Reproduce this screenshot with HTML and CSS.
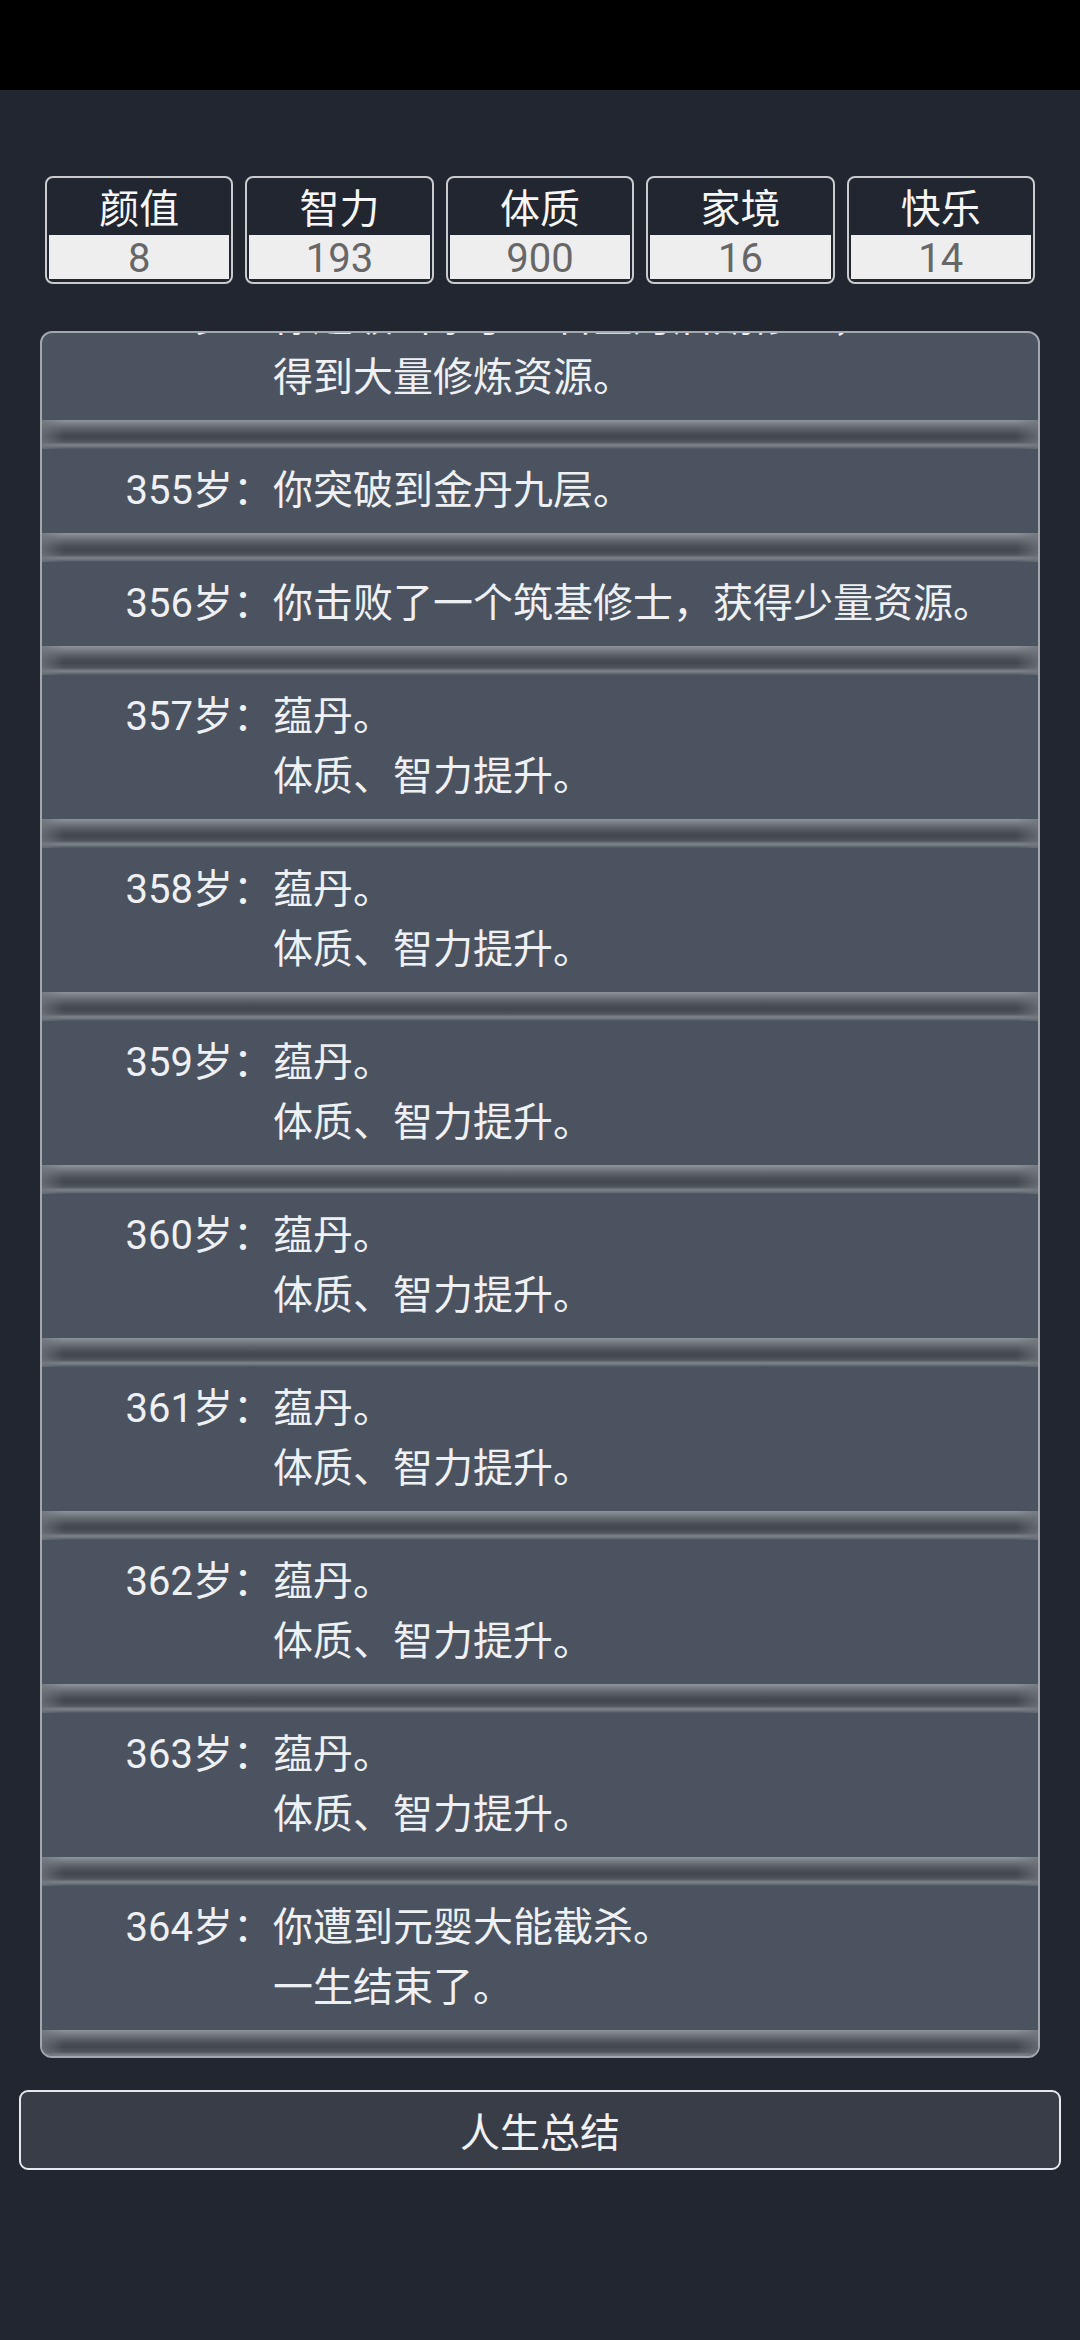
FILE: index.html
```html
<!DOCTYPE html>
<html lang="zh-CN">
<head>
    <meta charset="UTF-8">
    <title>人生重开</title>
    <link rel="stylesheet" href="styles.css">
</head>
<body>
    <div class="status-bar"></div>
    <div class="page">
        <div class="stats">
            <div class="stat">
                <div class="stat-name">颜值</div>
                <div class="stat-value">8</div>
            </div>
            <div class="stat">
                <div class="stat-name">智力</div>
                <div class="stat-value">193</div>
            </div>
            <div class="stat">
                <div class="stat-name">体质</div>
                <div class="stat-value">900</div>
            </div>
            <div class="stat">
                <div class="stat-name">家境</div>
                <div class="stat-value">16</div>
            </div>
            <div class="stat">
                <div class="stat-name">快乐</div>
                <div class="stat-value">14</div>
            </div>
        </div>

        <div class="life-panel">
            <ul class="life-list">
                <li class="life-item">
                    <span class="age">354岁：</span>
                    <span class="event">你越级击杀了一名金丹后期修士，<br>得到大量修炼资源。</span>
                </li>
                <li class="life-item">
                    <span class="age">355岁：</span>
                    <span class="event">你突破到金丹九层。</span>
                </li>
                <li class="life-item">
                    <span class="age">356岁：</span>
                    <span class="event">你击败了一个筑基修士，获得少量资源。</span>
                </li>
                <li class="life-item">
                    <span class="age">357岁：</span>
                    <span class="event">蕴丹。<br>体质、智力提升。</span>
                </li>
                <li class="life-item">
                    <span class="age">358岁：</span>
                    <span class="event">蕴丹。<br>体质、智力提升。</span>
                </li>
                <li class="life-item">
                    <span class="age">359岁：</span>
                    <span class="event">蕴丹。<br>体质、智力提升。</span>
                </li>
                <li class="life-item">
                    <span class="age">360岁：</span>
                    <span class="event">蕴丹。<br>体质、智力提升。</span>
                </li>
                <li class="life-item">
                    <span class="age">361岁：</span>
                    <span class="event">蕴丹。<br>体质、智力提升。</span>
                </li>
                <li class="life-item">
                    <span class="age">362岁：</span>
                    <span class="event">蕴丹。<br>体质、智力提升。</span>
                </li>
                <li class="life-item">
                    <span class="age">363岁：</span>
                    <span class="event">蕴丹。<br>体质、智力提升。</span>
                </li>
                <li class="life-item">
                    <span class="age">364岁：</span>
                    <span class="event">你遭到元婴大能截杀。<br>一生结束了。</span>
                </li>
            </ul>
        </div>

        <button class="summary-btn">人生总结</button>
    </div>
</body>
</html>
```

FILE: styles.css
```css
* {
    margin: 0;
    padding: 0;
    box-sizing: border-box;
    font-family: Roboto, "Noto Sans CJK SC", sans-serif;
}

body {
    width: 1080px;
    height: 2340px;
    background: #212630;
    color: #eef0f3;
    overflow: hidden;
}

.status-bar {
    height: 90px;
    background: #000;
}

.page {
    display: flex;
    flex-direction: column;
}

/* attribute boxes */
.stats {
    display: grid;
    grid-template-columns: repeat(5, 1fr);
    gap: 12px;
    padding: 0 45px;
    margin-top: 86px;
}

.stat {
    height: 108px;
    border: 2px solid #c9cbcf;
    border-radius: 8px;
    padding: 0 2px 3px;
    display: flex;
    flex-direction: column;
    background: #212630;
}

.stat-name {
    height: 57px;
    padding-top: 7px;
    font-size: 40px;
    line-height: 50px;
    text-align: center;
    color: #f6f6f6;
}

.stat-value {
    flex: 1;
    padding-top: 4px;
    background: #eeeeee;
    color: #676767;
    font-size: 40px;
    line-height: 40px;
    text-align: center;
}

/* life log */
.life-panel {
    margin: 47px 40px 0;
    border: 2px solid #a3a6ac;
    border-radius: 12px;
    background: #4b5361;
    overflow: hidden;
}

.life-list {
    list-style: none;
    margin-top: -57px;
}

.life-item {
    display: flex;
    padding: 12px 0;
    font-size: 40px;
    line-height: 60px;
    position: relative;
    margin-bottom: 29px;
}

.life-item::after {
    content: "";
    position: absolute;
    left: 0;
    right: 0;
    bottom: -29px;
    height: 29px;
    background: linear-gradient(to bottom,
        #8f939b 0, #7d828a 3px, #60656e 8px, #4a4f58 13px,
        #43484f 17px, #50555e 22px, #80858d 25px, #687078 27px, #4b5361 29px);
}

.life-item::before {
    content: "";
    position: absolute;
    left: 0;
    right: 0;
    bottom: -29px;
    height: 29px;
    z-index: 1;
    background: linear-gradient(to right,
        rgba(110, 115, 124, 0.75) 0, rgba(110, 115, 124, 0) 22px,
        rgba(110, 115, 124, 0) calc(100% - 22px), rgba(110, 115, 124, 0.75) 100%);
}

.life-item:last-child {
    margin-bottom: 26px;
}

.age {
    width: 231px;
    flex-shrink: 0;
    text-align: right;
}

.event {
    flex: 1;
}

.summary-btn {
    margin: 32px 19px 0;
    height: 80px;
    border: 2px solid #e6e8ee;
    border-radius: 9px;
    background: #393d47;
    color: #f0f1f4;
    font-size: 40px;
}
```
